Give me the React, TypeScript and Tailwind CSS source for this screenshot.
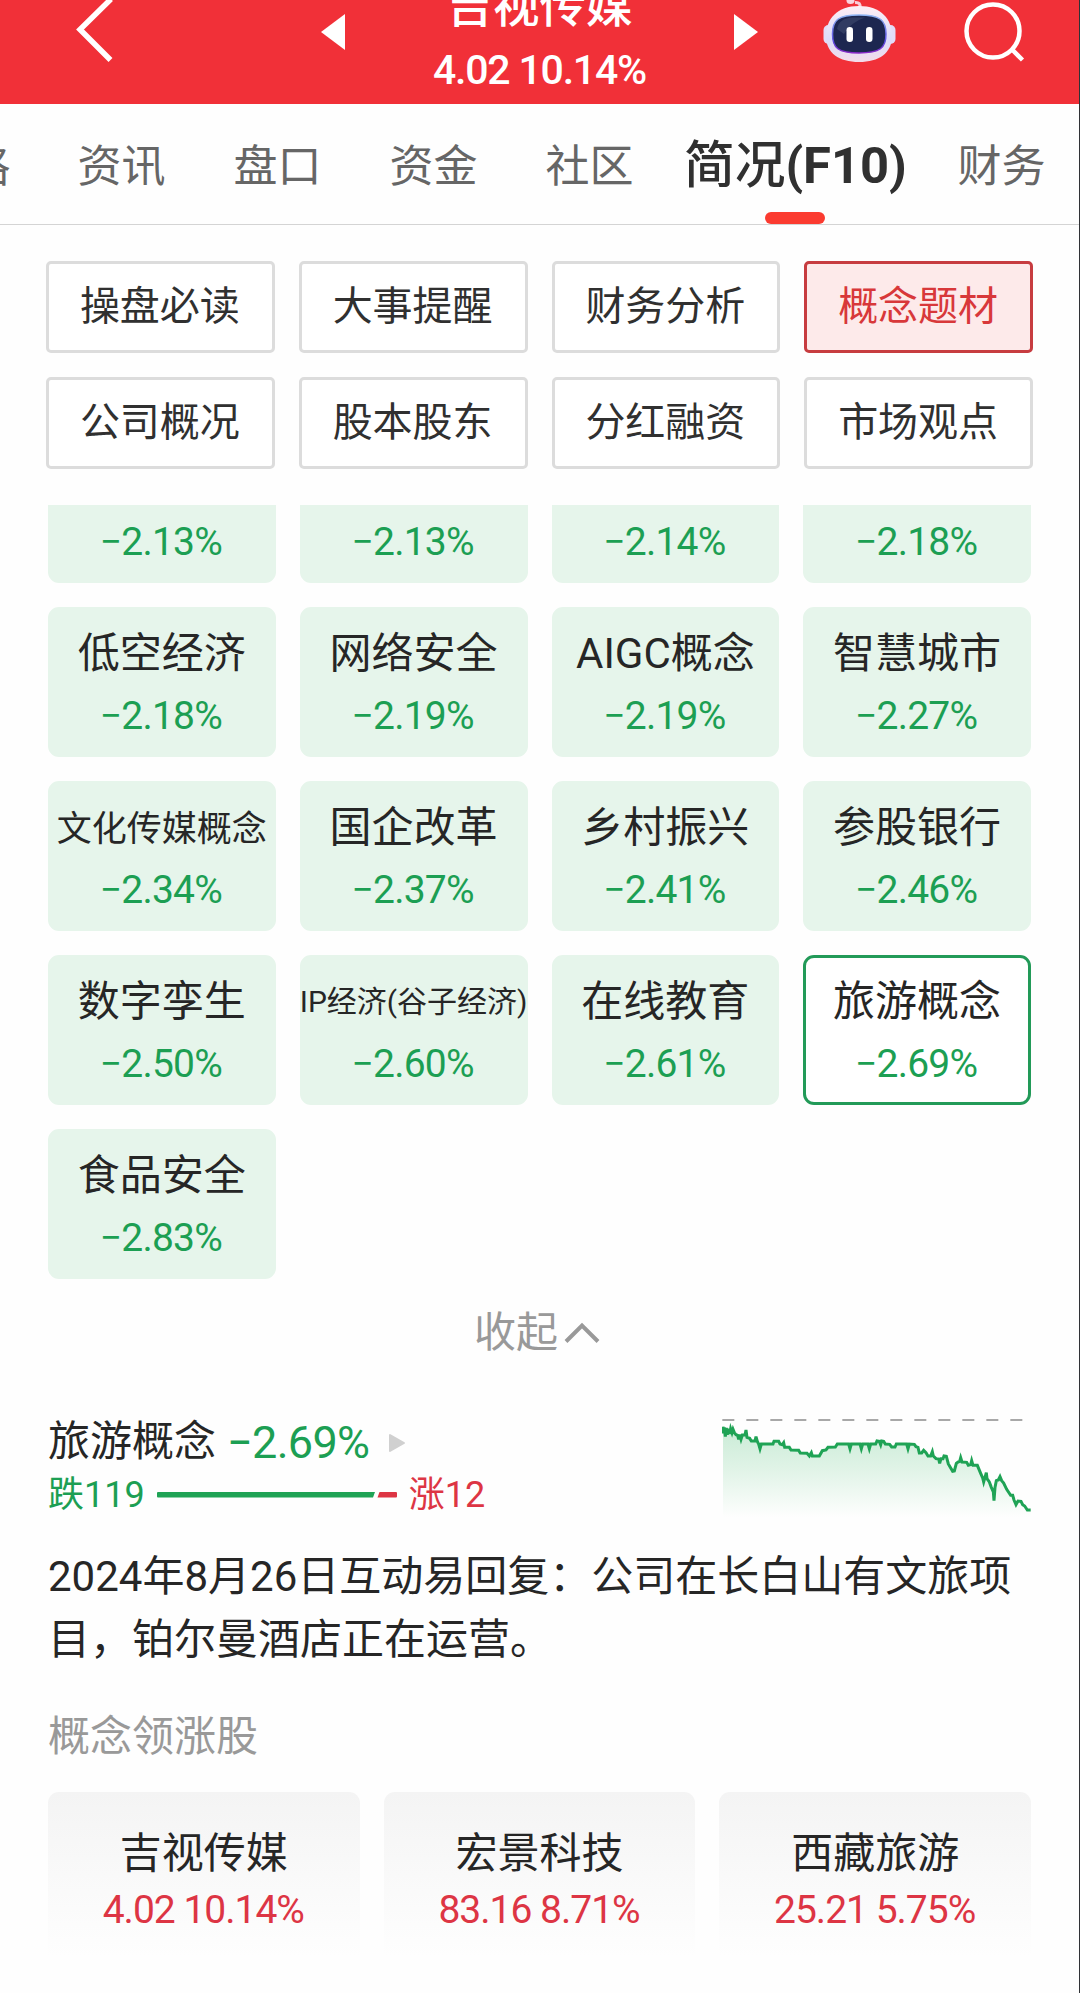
import clsx from 'clsx';

const tabs = ['资讯', '盘口', '资金', '社区', '简况(F10)', '财务'];
const activeTab = '简况(F10)';

const sections = [
  '操盘必读', '大事提醒', '财务分析', '概念题材',
  '公司概况', '股本股东', '分红融资', '市场观点',
];
const activeSection = '概念题材';

const scrolledRow = ['−2.13%', '−2.13%', '−2.14%', '−2.18%'];

const concepts = [
  { name: '低空经济', change: '−2.18%' },
  { name: '网络安全', change: '−2.19%' },
  { name: 'AIGC概念', change: '−2.19%' },
  { name: '智慧城市', change: '−2.27%' },
  { name: '文化传媒概念', change: '−2.34%', size: 'text-[35px] pt-0.5' },
  { name: '国企改革', change: '−2.37%' },
  { name: '乡村振兴', change: '−2.41%' },
  { name: '参股银行', change: '−2.46%' },
  { name: '数字孪生', change: '−2.50%' },
  { name: 'IP经济(谷子经济)', change: '−2.60%', size: 'text-[30px]' },
  { name: '在线教育', change: '−2.61%' },
  { name: '旅游概念', change: '−2.69%', selected: true },
  { name: '食品安全', change: '−2.83%' },
];

const leaders = [
  { name: '吉视传媒', quote: '4.02 10.14%' },
  { name: '宏景科技', quote: '83.16 8.71%' },
  { name: '西藏旅游', quote: '25.21 5.75%' },
];

const trend =
  'M69 80 L70 100 L73 82 L76 110 L79 84 L82 104 L85 86 L89 102 L92 86 L96 98 L99 88 L103 98 L108 104 L113 106 L116 118 L119 104 L123 118 L127 105 L135 105 L138 90 L141 112 L149 115 L154 123 L165 123 L168 110 L172 124 L176 132 L180 146 L184 132 L219 132 L222 124 L236 124 L240 132 L247 134 L251 128 L254 142 L268 142 L273 150 L296 151 L301 159 L321 160 L328 168 L334 158 L337 168 L358 168 L367 152 L378 150 L384 142 L406 141 L412 132 L446 132 L450 146 L454 132 L480 132 L484 146 L488 132 L504 132 L508 146 L512 132 L527 132 L531 123 L538 124 L542 134 L545 123 L551 124 L556 132 L569 133 L575 141 L585 141 L589 132 L620 132 L624 146 L628 132 L643 133 L648 140 L654 142 L658 159 L665 159 L671 151 L678 158 L684 168 L692 168 L697 155 L700 168 L708 176 L716 177 L719 190 L723 176 L729 176 L732 168 L739 169 L745 192 L758 214 L763 213 L769 190 L774 186 L779 184 L782 173 L786 186 L800 187 L805 196 L812 194 L815 182 L819 196 L832 196 L842 220 L848 234 L851 246 L855 232 L859 218 L861 236 L868 246 L874 262 L880 276 L882 302 L885 262 L889 242 L895 240 L900 230 L905 242 L911 249 L920 268 L932 286 L938 286 L942 300 L948 314 L954 303 L963 304 L968 314 L974 318 L982 330 L992 330';

function Robot() {
  return (
    <svg width="75" height="64" viewBox="823 0 75 64" className="ml-[63px]">
      <defs>
        <linearGradient id="shell" x1="0" y1="0" x2="0" y2="1">
          <stop offset="0" stopColor="#fdeef4" />
          <stop offset="0.6" stopColor="#dcdcfa" />
          <stop offset="1" stopColor="#f3dcea" />
        </linearGradient>
        <linearGradient id="rim" x1="0" y1="0" x2="0" y2="1">
          <stop offset="0" stopColor="#8fb4f2" />
          <stop offset="0.7" stopColor="#5a4be0" />
          <stop offset="1" stopColor="#8b28c9" />
        </linearGradient>
      </defs>
      <path d="M861 8 Q862 2 856 2.5" fill="none" stroke="#f8cdd8" strokeWidth="3" />
      <ellipse cx="851.500" cy="0.500" rx="4" ry="3.500" fill="#f8d4de" />
      <rect x="824.500" y="25" width="14" height="19" rx="5" fill="#e3dcf8" />
      <rect x="882.500" y="25" width="14" height="19" rx="5" fill="#e3dcf8" />
      <path d="M860 6 C882 6 893 19 893 36 C893 53 880 62 860 62 C840 62 827 53 827 36 C827 19 838 6 860 6 Z" fill="url(#shell)" />
      <path d="M860 15 C881 15 887 20 887 34 C887 48 881 53 860 53 C839 53 833.500 48 833.500 34 C833.500 20 839 15 860 15 Z" fill="#1d2750" stroke="url(#rim)" strokeWidth="1.500" />
      <path d="M838 29 Q840 18 854 17.500 L866 17.500 Q852 22 845 34 Z" fill="#465273" opacity="0.5" />
      <rect x="847.500" y="27" width="6.500" height="15" rx="3.200" fill="#fff" />
      <rect x="867" y="27" width="6.500" height="15" rx="3.200" fill="#fff" />
    </svg>
  );
}

function Header() {
  return (
    <header className="flex h-[104px] items-start overflow-hidden bg-[#f13038] text-white">
      <svg width="40" height="64" viewBox="76 0 40 64" className="ml-[76px]">
        <path d="M111 -1 L80 29.500 L110.500 60" fill="none" stroke="#fff" strokeWidth="5.500" />
      </svg>
      <svg width="26" height="64" viewBox="320 0 26 64" className="ml-[204px]">
        <path d="M345 14 V50 L321 32 Z" fill="#fff" />
      </svg>
      <div className="flex w-[387px] flex-col items-center font-medium">
        <div className="-mt-[24px] text-[46.5px] leading-[60px] whitespace-nowrap">吉视传媒</div>
        <div className="mt-[3px] text-[41px] leading-[63px] tracking-[-1.2px] whitespace-nowrap">4.02 10.14%</div>
      </div>
      <svg width="26" height="64" viewBox="734 0 26 64">
        <path d="M735 14 V50 L759 32 Z" fill="#fff" />
      </svg>
      <Robot />
      <svg width="62" height="64" viewBox="964 0 62 64" className="ml-[66px]">
        <circle cx="994" cy="31" r="26.500" fill="none" stroke="#fff" strokeWidth="4.500" />
        <path d="M1012 48.500 L1023.500 60" stroke="#fff" strokeWidth="4.500" />
      </svg>
    </header>
  );
}

function Tabs() {
  return (
    <nav className="flex h-[121px] items-center overflow-hidden border-b border-[#d4d4d4] text-[44px] whitespace-nowrap text-[#666]">
      <div className="flex w-[10.5px] shrink-0 justify-end pt-[6px]">格</div>
      <div className="ml-[67px] flex shrink-0 items-center gap-[68px]">
        {tabs.map((tab) =>
          tab === activeTab ? (
            <div key={tab} className="relative -mx-[17.5px] flex h-[120px] items-center pt-[4px] text-[50.7px] font-bold text-[#303030]">
              <span className="font-medium">简况</span>(F10)
              <span className="absolute bottom-0 left-1/2 h-3 w-[60px] -translate-x-1/2 rounded-full bg-[#fb3b30]" />
            </div>
          ) : (
            <div key={tab} className="pt-[6px]">{tab}</div>
          )
        )}
      </div>
    </nav>
  );
}

export default function App() {
  return (
    <div className="h-[1993px] w-[1080px] overflow-hidden border-r border-[#303236] bg-[#fefefe] font-[Roboto,'Noto_Sans_CJK_SC',sans-serif] text-[#262626]">
      <Header />
      <Tabs />

      <div className="mt-9 ml-[46px] grid w-[987px] grid-cols-4 gap-6">
        {sections.map((section) => (
          <div
            key={section}
            className={clsx(
              'flex h-[92px] items-center justify-center rounded-[5px] border-3 pr-px text-[40px] leading-none',
              section === activeSection
                ? 'border-[#c73c40] bg-[#fdeaea] text-[#d8383a]'
                : 'border-[#dcdcdc] bg-white text-[#303030]'
            )}
          >
            {section}
          </div>
        ))}
      </div>

      {/* row partly scrolled under the section buttons */}
      <div className="ml-12 mt-9 grid w-[983px] grid-cols-4 gap-6">
        {scrolledRow.map((change, i) => (
          <div key={i} className="h-[78px] rounded-b-[11px] bg-[#e6f5eb] pr-0.5 text-center text-[39px] leading-[74px] tracking-[-0.8px] text-[#1c9f53]">
            {change}
          </div>
        ))}
      </div>

      <div className="ml-12 mt-6 grid w-[983px] grid-cols-4 gap-6">
        {concepts.map((c) => (
          <div
            key={c.name}
            className={clsx(
              'flex h-[150px] flex-col items-center rounded-[11px] border-3 pt-[14px] whitespace-nowrap',
              c.selected ? 'border-[#229a58] bg-white' : 'border-[#e6f5eb] bg-[#e6f5eb]'
            )}
          >
            <div className={clsx('h-[59px] leading-[59px]', c.size || 'text-[42px]')}>{c.name}</div>
            <div className="pr-0.5 text-[39px] leading-[66px] tracking-[-0.8px] text-[#1c9f53]">{c.change}</div>
          </div>
        ))}
      </div>

      <div className="mt-[24px] ml-[474px] flex h-[60px] items-center text-[42px] leading-[60px] text-[#999]">
        收起
        <svg width="36" height="22" viewBox="0 0 36 22" className="ml-[6px]">
          <path d="M2 19.500 L18 3.500 L34 19.500" fill="none" stroke="#999" strokeWidth="4" />
        </svg>
      </div>

      <div className="mx-12 mt-[47px] flex h-[110px] w-[986px] justify-between">
        <div>
          <div className="flex h-[62px] items-center pt-px text-[42px] leading-[62px]">
            旅游概念
            <span className="ml-[11px] pt-[2px] text-[45px] tracking-[-0.7px] text-[#1c9f53]">−2.69%</span>
            <svg width="18" height="20" viewBox="0 0 18 20" className="mt-[3px] ml-[19px]">
              <path d="M2 2 V18 L16 10 Z" fill="#d0d0d0" stroke="#d0d0d0" strokeWidth="2" strokeLinejoin="round" />
            </svg>
          </div>
          <div className="-mt-[7px] flex h-[60px] items-center text-[36px] leading-none">
            <span className="text-[#1c9f53]">跌119</span>
            <svg width="240" height="6" viewBox="0 0 240 6" className="mx-3">
              <path d="M1 0 H218 L216 5.500 H1 Q0 5.500 0 4.500 V1 Q0 0 1 0 Z" fill="#1fa355" />
              <path d="M222.500 0 H239 Q240 0 240 1 V4.500 Q240 5.500 239 5.500 H220.500 Z" fill="#dd3544" />
            </svg>
            <span className="text-[#dd3544]">涨12</span>
          </div>
        </div>
        <svg width="312" height="102" viewBox="66 48 936 306" className="mt-[6px]">
          <defs>
            <linearGradient id="fade" x1="0" y1="80" x2="0" y2="352" gradientUnits="userSpaceOnUse">
              <stop offset="0" stopColor="#c9ebd6" />
              <stop offset="0.5" stopColor="#e2f4e8" />
              <stop offset="1" stopColor="#fefefe" />
            </linearGradient>
          </defs>
          <path d={`${trend} V352 H69 Z`} fill="url(#fade)" />
          <path d="M67 60 H967" stroke="#a8a8a8" strokeWidth="6" strokeDasharray="36 36" />
          <path d={trend} fill="none" stroke="#1fa355" strokeWidth="9" strokeLinejoin="miter" />
        </svg>
      </div>

      <p className="mx-12 mt-[25px] text-[42px] leading-[63px]">
        2024年8月26日互动易回复：公司在长白山有文旅项目，铂尔曼酒店正在运营。
      </p>

      <div className="mx-12 mt-[35px] text-[42px] leading-[62px] text-[#999]">概念领涨股</div>

      <div className="ml-12 mt-[24px] grid w-[983px] grid-cols-3 gap-6">
        {leaders.map((s) => (
          <div key={s.name} className="flex h-[165px] flex-col items-center rounded-t-[11px] bg-linear-to-b from-[#f4f4f4] to-[#fefefe] pt-[32px]">
            <div className="text-[42px] leading-[60px]">{s.name}</div>
            <div className="pr-px text-[39px] leading-[52px] tracking-[-1px] text-[#dd3544]">{s.quote}</div>
          </div>
        ))}
      </div>
    </div>
  );
}
